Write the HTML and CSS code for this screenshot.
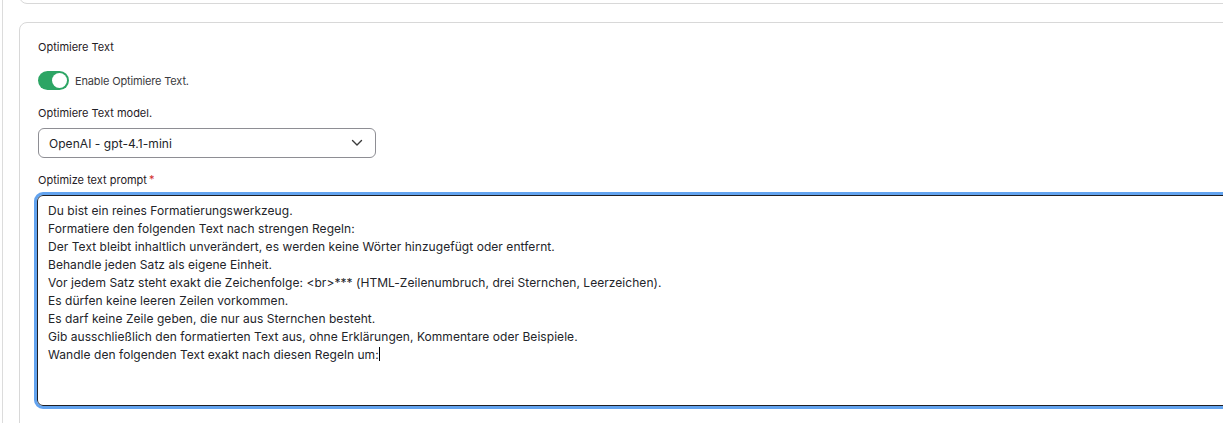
FILE: index.html
```html
<!DOCTYPE html>
<html lang="de">
<head>
<meta charset="utf-8">
<title>Optimiere Text</title>
<link rel="stylesheet" href="styles.css">
</head>
<body>
<div class="page">
  <div class="card card-prev"></div>
  <div class="card">
    <div class="section-title">Optimiere Text</div>
    <label class="toggle-row">
      <span class="toggle"><span class="knob"></span></span>
      <span class="toggle-label">Enable Optimiere Text.</span>
    </label>
    <div class="field">
      <div class="field-label">Optimiere Text model.</div>
      <div class="select">
        <span class="select-value">OpenAI - gpt-4.1-mini</span>
        <svg class="chevron" width="12" height="8" viewBox="0 0 12 8"><path d="M1.5 1.5 L6 6 L10.5 1.5" fill="none" stroke="#3b3b3b" stroke-width="1.4" stroke-linecap="round" stroke-linejoin="round"/></svg>
      </div>
    </div>
    <div class="field field-prompt">
      <div class="field-label">Optimize text prompt<span class="req">*</span></div>
      <div class="textarea">
        <div>Du bist ein reines Formatierungswerkzeug.</div>
        <div>Formatiere den folgenden Text nach strengen Regeln:</div>
        <div>Der Text bleibt inhaltlich unverändert, es werden keine Wörter hinzugefügt oder entfernt.</div>
        <div>Behandle jeden Satz als eigene Einheit.</div>
        <div>Vor jedem Satz steht exakt die Zeichenfolge: &lt;br&gt;*** (HTML-Zeilenumbruch, drei Sternchen, Leerzeichen).</div>
        <div>Es dürfen keine leeren Zeilen vorkommen.</div>
        <div>Es darf keine Zeile geben, die nur aus Sternchen besteht.</div>
        <div>Gib ausschließlich den formatierten Text aus, ohne Erklärungen, Kommentare oder Beispiele.</div>
        <div>Wandle den folgenden Text exakt nach diesen Regeln um:<span class="caret"></span></div>
      </div>
    </div>
  </div>
</div>
</body>
</html>
```
FILE: styles.css
```css
html, body {
  margin: 0;
  padding: 0;
  background: #ffffff;
  overflow: hidden;
}
body {
  font-family: Inter, "Noto Sans", sans-serif;
  color: #232429;
  padding-left: 2px;
  height: 423px;
}
.page {
  display: flex;
  flex-direction: column;
  border-left: 1px solid #dcdcdc;
  padding-left: 16px;
  height: 100%;
  width: 1400px;
  box-sizing: border-box;
}
.card {
  border: 1px solid #d8d8d8;
  border-radius: 8px;
  background: #fff;
  padding: 15px 18px 40px 18px;
  flex: none;
}
.card-prev {
  margin-top: -40px;
  height: 42px;
  padding: 0;
  margin-bottom: 18px;
}
.section-title {
  font-size: 11px;
  line-height: 18px;
  font-weight: 400;
  color: #1f2026;
}
.toggle-row {
  display: flex;
  align-items: center;
  gap: 6px;
  margin-top: 15px;
}
.toggle {
  width: 31px;
  height: 19px;
  border-radius: 10px;
  background: #2ca564;
  display: flex;
  align-items: center;
  justify-content: flex-end;
  padding-right: 2px;
  box-sizing: border-box;
}
.knob {
  width: 15px;
  height: 15px;
  border-radius: 50%;
  background: #fff;
}
.toggle-label {
  font-size: 11px;
  letter-spacing: -0.15px;
  color: #3b3b40;
}
.field {
  margin-top: 15px;
}
.field-prompt {
  margin-top: 14px;
}
.field-label {
  font-size: 11px;
  line-height: 16px;
  font-weight: 400;
  color: #1f2026;
  margin-bottom: 7px;
}
.req {
  color: #d12b2b;
  margin-left: 2px;
  position: relative;
  top: -1px;
}
.select {
  width: 338px;
  height: 30px;
  box-sizing: border-box;
  border: 1px solid #8e8e94;
  border-radius: 6px;
  display: flex;
  align-items: center;
  justify-content: space-between;
  padding: 0 12px 0 10px;
  font-size: 12px;
  letter-spacing: 0.05px;
  color: #232429;
}
.textarea {
  width: 1250px;
  height: 211px;
  box-sizing: border-box;
  border: 1px solid #1f1f24;
  border-radius: 6px;
  outline: 3px solid #62a3ef;
  outline-offset: 0;
  margin-left: -1px;
  padding: 6px 10px;
  font-size: 12px;
  letter-spacing: 0.05px;
  line-height: 18px;
  color: #232429;
}
.caret {
  display: inline-block;
  width: 1px;
  height: 14px;
  background: #000;
  vertical-align: -2px;
}
```
